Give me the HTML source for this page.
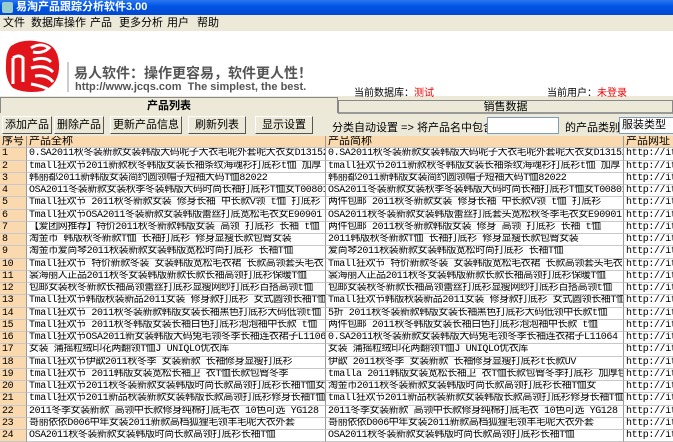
<!DOCTYPE html>
<html><head><meta charset="utf-8">
<style>
*{margin:0;padding:0;box-sizing:border-box}
body{width:673px;height:433px;overflow:hidden;background:#ece9d8;font-family:"Liberation Sans","WenQuanYi Zen Hei","Noto Sans CJK SC",sans-serif;font-size:11px;color:#000;position:relative}
.abs{position:absolute;white-space:nowrap}
#title{left:0;top:0;width:673px;height:15px;background:linear-gradient(#2a78f0,#0055e5 40%,#0049d0);color:#fff;font-weight:bold;font-size:11px;line-height:15px;padding-left:16px}
#menu{left:0;top:15px;width:673px;height:16px;line-height:16px}
#menu span{position:absolute;top:0}
#logo{left:0;top:31px;width:673px;height:65px;background:#fff}
.tab{height:16px;line-height:16px;text-align:center;border:1px solid #888;background:#ece9d8}
.btn{top:116px;height:18px;line-height:16px;border:1px solid #fff;border-right-color:#555;border-bottom-color:#555;text-align:center;background:#ece9d8}
#grid{left:0;top:136px;width:673px}
.r{height:12.25px;line-height:12px;position:relative;overflow:hidden;white-space:nowrap}
.r div{position:absolute;top:0;height:100%;border-right:1px solid #999;border-bottom:1px solid #c8c8c8;overflow:hidden;padding-left:2px;font-family:"Liberation Mono","WenQuanYi Zen Hei",monospace;font-size:10px;letter-spacing:-0.4px}
.c0{left:0;width:27px;background:#fbd9ae}
.c1{left:27px;width:299px;background:#fff}
.c2{left:326px;width:298px;background:#fff}
.c3{left:624px;width:60px;background:#fff}
.h div{background:#fbd9ae!important;font-size:11px!important;letter-spacing:0!important}
</style></head><body>
<div class="abs" id="title">易淘产品跟踪分析软件3.00</div>
<div class="abs" style="left:2px;top:2px;width:11px;height:11px;background:#9cc;border-radius:2px"></div>
<div class="abs" id="menu"><span style="left:3px">文件</span><span style="left:31px">数据库操作</span><span style="left:90px">产品</span><span style="left:119px">更多分析</span><span style="left:167px">用户</span><span style="left:197px">帮助</span></div>
<div class="abs" id="logo"></div>
<svg class="abs" style="left:3px;top:36px" width="58" height="58" viewBox="0 0 58 58">
<path d="M8 10 Q20 2 38 6 Q55 8 56 28 Q57 48 40 55 Q22 58 10 52 Q2 44 3 28 Q3 16 8 10Z" fill="#e0141a"/>
<path d="M10 22 L10 48 M10 22 Q16 18 20 22 L20 46 M28 12 Q38 6 46 12 Q40 18 30 16 M30 24 Q42 20 48 26 M28 32 Q42 28 50 36 M32 40 Q44 38 50 46 M28 48 Q40 50 46 54" stroke="#fff" stroke-width="3" fill="none"/>
</svg>
<div class="abs" style="left:67px;top:62px;width:2px;height:30px;background:#ccc"></div>
<div class="abs" style="left:74px;top:63px;font-size:14px;font-weight:bold;color:#555">易人软件：操作更容易，软件更人性！</div>
<div class="abs" style="left:75px;top:81px;font-size:11px;font-weight:bold;color:#555">http://www.jcqs.com&nbsp;&nbsp;The simplest, the best.</div>
<div class="abs" style="left:354px;top:84px;font-size:10px">当前数据库：<span style="color:#e00">测试</span></div>
<div class="abs" style="left:547px;top:84px;font-size:10px">当前用户：<span style="color:#e00">未登录</span></div>
<div class="abs tab" style="left:0;top:97px;width:338px;font-weight:bold;border-bottom:none">产品列表</div>
<div class="abs tab" style="left:338px;top:100px;width:335px;height:14px;line-height:13px;border-bottom:2px solid #999">销售数据</div>
<div class="abs btn" style="left:2px;width:50px">添加产品</div>
<div class="abs btn" style="left:54px;width:50px">删除产品</div>
<div class="abs btn" style="left:110px;width:72px">更新产品信息</div>
<div class="abs btn" style="left:188px;width:58px">刷新列表</div>
<div class="abs btn" style="left:255px;width:58px">显示设置</div>
<div class="abs" style="left:332px;top:119px">分类自动设置 => 将产品名中包含：</div>
<div class="abs" style="left:487px;top:117px;width:72px;height:17px;background:#fff;border:1px solid #7f9db9"></div>
<div class="abs" style="left:565px;top:119px">的产品类别</div>
<div class="abs" style="left:619px;top:117px;width:60px;height:17px;background:#fff;border:1px solid #7f9db9;padding-left:2px;line-height:15px">服装类型</div>
<div class="abs" id="grid">
<div class="r h"><div class="c0">序号</div><div class="c1">产品全称</div><div class="c2">产品简称</div><div class="c3">产品网址</div></div>
<div class="r"><div class="c0">1</div><div class="c1">0.SA2011秋冬装新款女装韩版大码呢子大衣毛呢外套呢大衣女D13152</div><div class="c2">0.SA2011秋冬装新款女装韩版大码呢子大衣毛呢外套呢大衣女D13152</div><div class="c3">http://ite</div></div>
<div class="r"><div class="c0">2</div><div class="c1">tmall狂欢节2011新款秋冬韩版女装长袖条纹海魂衫打底衫t恤 加厚</div><div class="c2">tmall狂欢节2011新款秋冬韩版女装长袖条纹海魂衫打底衫t恤 加厚</div><div class="c3">http://ite</div></div>
<div class="r"><div class="c0">3</div><div class="c1">韩丽都2011新韩版女装简约圆领帽子短袖大码T恤82022</div><div class="c2">韩丽都2011新韩版女装简约圆领帽子短袖大码T恤82022</div><div class="c3">http://ite</div></div>
<div class="r"><div class="c0">4</div><div class="c1">OSA2011冬装新款女装秋季冬装韩版大码时尚长袖打底衫T恤女T00801</div><div class="c2">OSA2011冬装新款女装秋季冬装韩版大码时尚长袖打底衫T恤女T00801</div><div class="c3">http://ite</div></div>
<div class="r"><div class="c0">5</div><div class="c1">Tmall狂欢节 2011秋冬新款女装 修身长袖 中长款V领 t恤 打底衫</div><div class="c2">两件包邮 2011秋冬新款女装 修身长袖 中长款V领 t恤 打底衫</div><div class="c3">http://ite</div></div>
<div class="r"><div class="c0">6</div><div class="c1">Tmall狂欢节OSA2011冬装新款女装韩版蕾丝打底宽松毛衣女E90901</div><div class="c2">OSA2011秋冬装新款女装韩版蕾丝打底套头宽松秋冬季毛衣女E90901</div><div class="c3">http://ite</div></div>
<div class="r"><div class="c0">7</div><div class="c1">【爱团网推荐】特价2011秋冬新款韩版女装 高领 打底衫 长袖 t恤</div><div class="c2">两件包邮 2011秋冬新款韩版女装 修身 高领 打底衫 长袖 t恤</div><div class="c3">http://ite</div></div>
<div class="r"><div class="c0">8</div><div class="c1">淘金币 韩版秋冬新款T恤 长袖打底衫 修身显瘦长款包臀女装</div><div class="c2">2011韩版秋冬新款T恤 长袖打底衫 修身显瘦长款包臀女装</div><div class="c3">http://ite</div></div>
<div class="r"><div class="c0">9</div><div class="c1">淘金币爱尚琴2011秋装新款女装韩版宽松时尚打底衫 长袖T恤</div><div class="c2">爱尚琴2011秋装新款女装韩版宽松时尚打底衫 长袖T恤</div><div class="c3">http://ite</div></div>
<div class="r"><div class="c0">10</div><div class="c1">Tmall狂欢节 特价新款冬装 女装韩版宽松毛衣裙 长款高领套头毛衣</div><div class="c2">Tmall狂欢节 特价新款冬装 女装韩版宽松毛衣裙 长款高领套头毛衣</div><div class="c3">http://ite</div></div>
<div class="r"><div class="c0">11</div><div class="c1">裳海丽人正品2011秋冬女装韩版新款长款长袖高领打底衫保暖T恤</div><div class="c2">裳海丽人正品2011秋冬女装韩版新款长款长袖高领打底衫保暖T恤</div><div class="c3">http://ite</div></div>
<div class="r"><div class="c0">12</div><div class="c1">包邮女装秋冬新款长袖高领蕾丝打底衫显瘦网纱打底衫百搭高领t恤</div><div class="c2">包邮女装秋冬新款长袖高领蕾丝打底衫显瘦网纱打底衫百搭高领t恤</div><div class="c3">http://ite</div></div>
<div class="r"><div class="c0">13</div><div class="c1">Tmall狂欢节韩版秋装新品2011女装 修身款打底衫 女式圆领长袖T恤</div><div class="c2">Tmall狂欢节韩版秋装新品2011女装 修身款打底衫 女式圆领长袖T恤</div><div class="c3">http://ite</div></div>
<div class="r"><div class="c0">14</div><div class="c1">Tmall狂欢节 2011秋冬装新款韩版女装长袖黑色打底衫大码低领t恤</div><div class="c2">5折 2011秋冬装新款韩版女装长袖黑色打底衫大码低领中长款t恤</div><div class="c3">http://ite</div></div>
<div class="r"><div class="c0">15</div><div class="c1">Tmall狂欢节 2011秋冬韩版女装长袖白色打底衫泡泡袖中长款 t恤</div><div class="c2">两件包邮 2011秋冬韩版女装长袖白色打底衫泡泡袖中长款 t恤</div><div class="c3">http://ite</div></div>
<div class="r"><div class="c0">16</div><div class="c1">Tmall狂欢节OSA2011新女装韩版大码兔毛领冬季长袖连衣裙子L11064</div><div class="c2">0.SA2011秋冬装新款女装韩版大码兔毛领冬季长袖连衣裙子L11064</div><div class="c3">http://ite</div></div>
<div class="r"><div class="c0">17</div><div class="c1">女装 蒲摇粒绒印花两翻领T恤J UNIQLO优衣库</div><div class="c2">女装 蒲摇粒绒印花两翻领T恤J UNIQLO优衣库</div><div class="c3">http://ite</div></div>
<div class="r"><div class="c0">18</div><div class="c1">Tmall狂欢节伊歆2011秋冬季 女装新款 长袖修身显瘦打底衫</div><div class="c2">伊歆 2011秋冬季 女装新款 长袖修身显瘦打底衫t长款UV</div><div class="c3">http://ite</div></div>
<div class="r"><div class="c0">19</div><div class="c1">tmall狂欢节 2011韩版女装宽松长袖卫 衣T恤长款包臀冬季</div><div class="c2">tmalla 2011韩版女装宽松长袖卫 衣T恤长款包臀冬季打底衫 加厚包邮</div><div class="c3">http://ite</div></div>
<div class="r"><div class="c0">20</div><div class="c1">Tmall狂欢节2011秋冬装新款女装韩版时尚长款高领打底衫长袖T恤女</div><div class="c2">淘金币2011秋冬装新款女装韩版时尚长款高领打底衫长袖T恤女</div><div class="c3">http://ite</div></div>
<div class="r"><div class="c0">21</div><div class="c1">tmall狂欢节2011新品秋装新款女装韩版长款高领打底衫修身长袖T恤</div><div class="c2">tmall狂欢节2011新品秋装新款女装韩版长款高领打底衫修身长袖T恤</div><div class="c3">http://ite</div></div>
<div class="r"><div class="c0">22</div><div class="c1">2011冬季女装新款 高领中长款修身纯棉打底毛衣 10色可选 YG128</div><div class="c2">2011冬季女装新款 高领中长款修身纯棉打底毛衣 10色可选 YG128</div><div class="c3">http://ite</div></div>
<div class="r"><div class="c0">23</div><div class="c1">哥丽依依D006中年女装2011新款高档狐狸毛领羊毛呢大衣外套</div><div class="c2">哥丽依依D006中年女装2011新款高档狐狸毛领羊毛呢大衣外套</div><div class="c3">http://ite</div></div>
<div class="r"><div class="c0">24</div><div class="c1">OSA2011秋冬装新款女装韩版时尚长款高领打底衫长袖T恤</div><div class="c2">OSA2011秋冬装新款女装韩版时尚长款高领打底衫长袖T恤</div><div class="c3">http://ite</div></div>
</div>
</body></html>
